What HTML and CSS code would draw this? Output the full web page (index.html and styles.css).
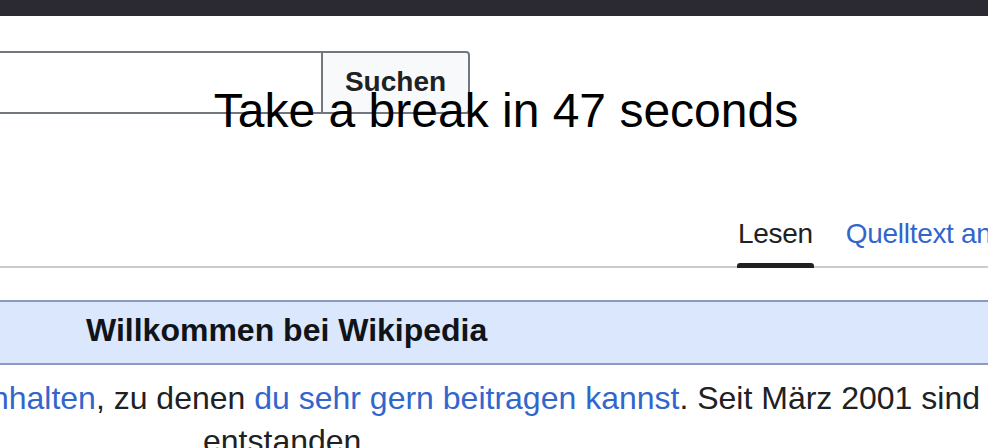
FILE: index.html
```html
<!DOCTYPE html>
<html lang="de">
<head>
<meta charset="utf-8">
<title>Wikipedia</title>
<link rel="stylesheet" href="styles.css">
</head>
<body>
<div class="topbar"></div>
<div class="page">
  <form class="search">
    <input class="search-input" type="search" aria-label="Wikipedia durchsuchen">
    <button class="search-button" type="button">Suchen</button>
  </form>
  <nav class="tabs">
    <div class="tab tab-active">
      <span class="tab-label">Lesen</span>
      <span class="tab-bar"></span>
    </div>
    <div class="tab">
      <a class="tab-label link" href="#">Quelltext anzeigen</a>
      <span class="tab-bar tab-bar-none"></span>
    </div>
  </nav>
  <div class="welcome">
    <h1 class="welcome-title">Willkommen bei Wikipedia</h1>
  </div>
  <div class="intro">
    <div class="intro-line intro-line-first"><span class="intro-text"><a class="link" href="#">Inhalten</a>, zu denen <a class="link" href="#">du sehr gern beitragen kannst</a>. Seit März 2001 sind</span></div>
    <div class="intro-line intro-line-second">entstanden.</div>
  </div>
</div>
<div class="break-overlay">Take a break in 47 seconds</div>
</body>
</html>
```

FILE: styles.css
```css
html, body {
  margin: 0;
  padding: 0;
}
body {
  width: 988px;
  height: 448px;
  overflow: hidden;
  background: #ffffff;
  color: #202122;
  font-family: "Liberation Sans", Arial, sans-serif;
  position: relative;
}
.topbar {
  height: 16px;
  background: #2b2a33;
}
.page {
  display: flex;
  flex-direction: column;
}
.search {
  display: flex;
  margin: 35px 0 0 0;
  height: 63px;
}
.search-input {
  -webkit-appearance: none;
  appearance: none;
  box-sizing: border-box;
  width: 321px;
  height: 63px;
  margin: 0;
  border: 2px solid #72777d;
  border-left: none;
  border-right: none;
  background: #ffffff;
  outline: none;
  padding: 0;
}
.search-button {
  box-sizing: border-box;
  width: 149px;
  height: 63px;
  margin: 0;
  padding: 0 0 2px 0;
  border: 2px solid #72777d;
  border-radius: 0 4px 4px 0;
  background: #f8f9fa;
  color: #202122;
  font-family: "Liberation Sans", Arial, sans-serif;
  font-weight: bold;
  font-size: 28px;
  line-height: 28px;
}
.tabs {
  display: flex;
  align-items: flex-end;
  gap: 31px;
  margin-top: 102px;
  padding-left: 737px;
  border-bottom: 2px solid #c8ccd1;
  white-space: nowrap;
}
.tab {
  display: flex;
  flex-direction: column;
}
.tab-label {
  font-size: 28px;
  line-height: 35px;
  letter-spacing: -0.3px;
  padding: 0 1px;
  color: #202122;
  text-decoration: none;
}
.tab-label.link {
  color: #3366cc;
}
.tab-bar {
  height: 5px;
  margin-top: 12px;
  margin-bottom: -2px;
  background: #202122;
  border-radius: 3px 3px 0 0;
}
.tab-bar-none {
  background: transparent;
}
.welcome {
  margin-top: 32px;
  background: #dbe7fd;
  border-top: 2px solid #8a9ac0;
  border-bottom: 2px solid #8a9ac0;
  padding: 8px 0 13px 86px;
}
.welcome-title {
  margin: 0;
  font-size: 32px;
  line-height: 40px;
  font-weight: bold;
  color: #101418;
  white-space: nowrap;
}
.intro {
  margin-top: 12px;
  font-size: 32px;
  line-height: 43px;
  color: #202122;
}
.intro-line {
  white-space: nowrap;
}
.intro-line-first {
  display: flex;
  justify-content: flex-end;
  padding-right: 8px;
}
.intro-line-second {
  padding-left: 203px;
}
.link {
  color: #3366cc;
  text-decoration: none;
}
.break-overlay {
  position: absolute;
  top: 87px;
  left: 506px;
  transform: translateX(-50%);
  font-size: 48px;
  line-height: 48px;
  color: #000000;
  white-space: nowrap;
  z-index: 10;
}
```
